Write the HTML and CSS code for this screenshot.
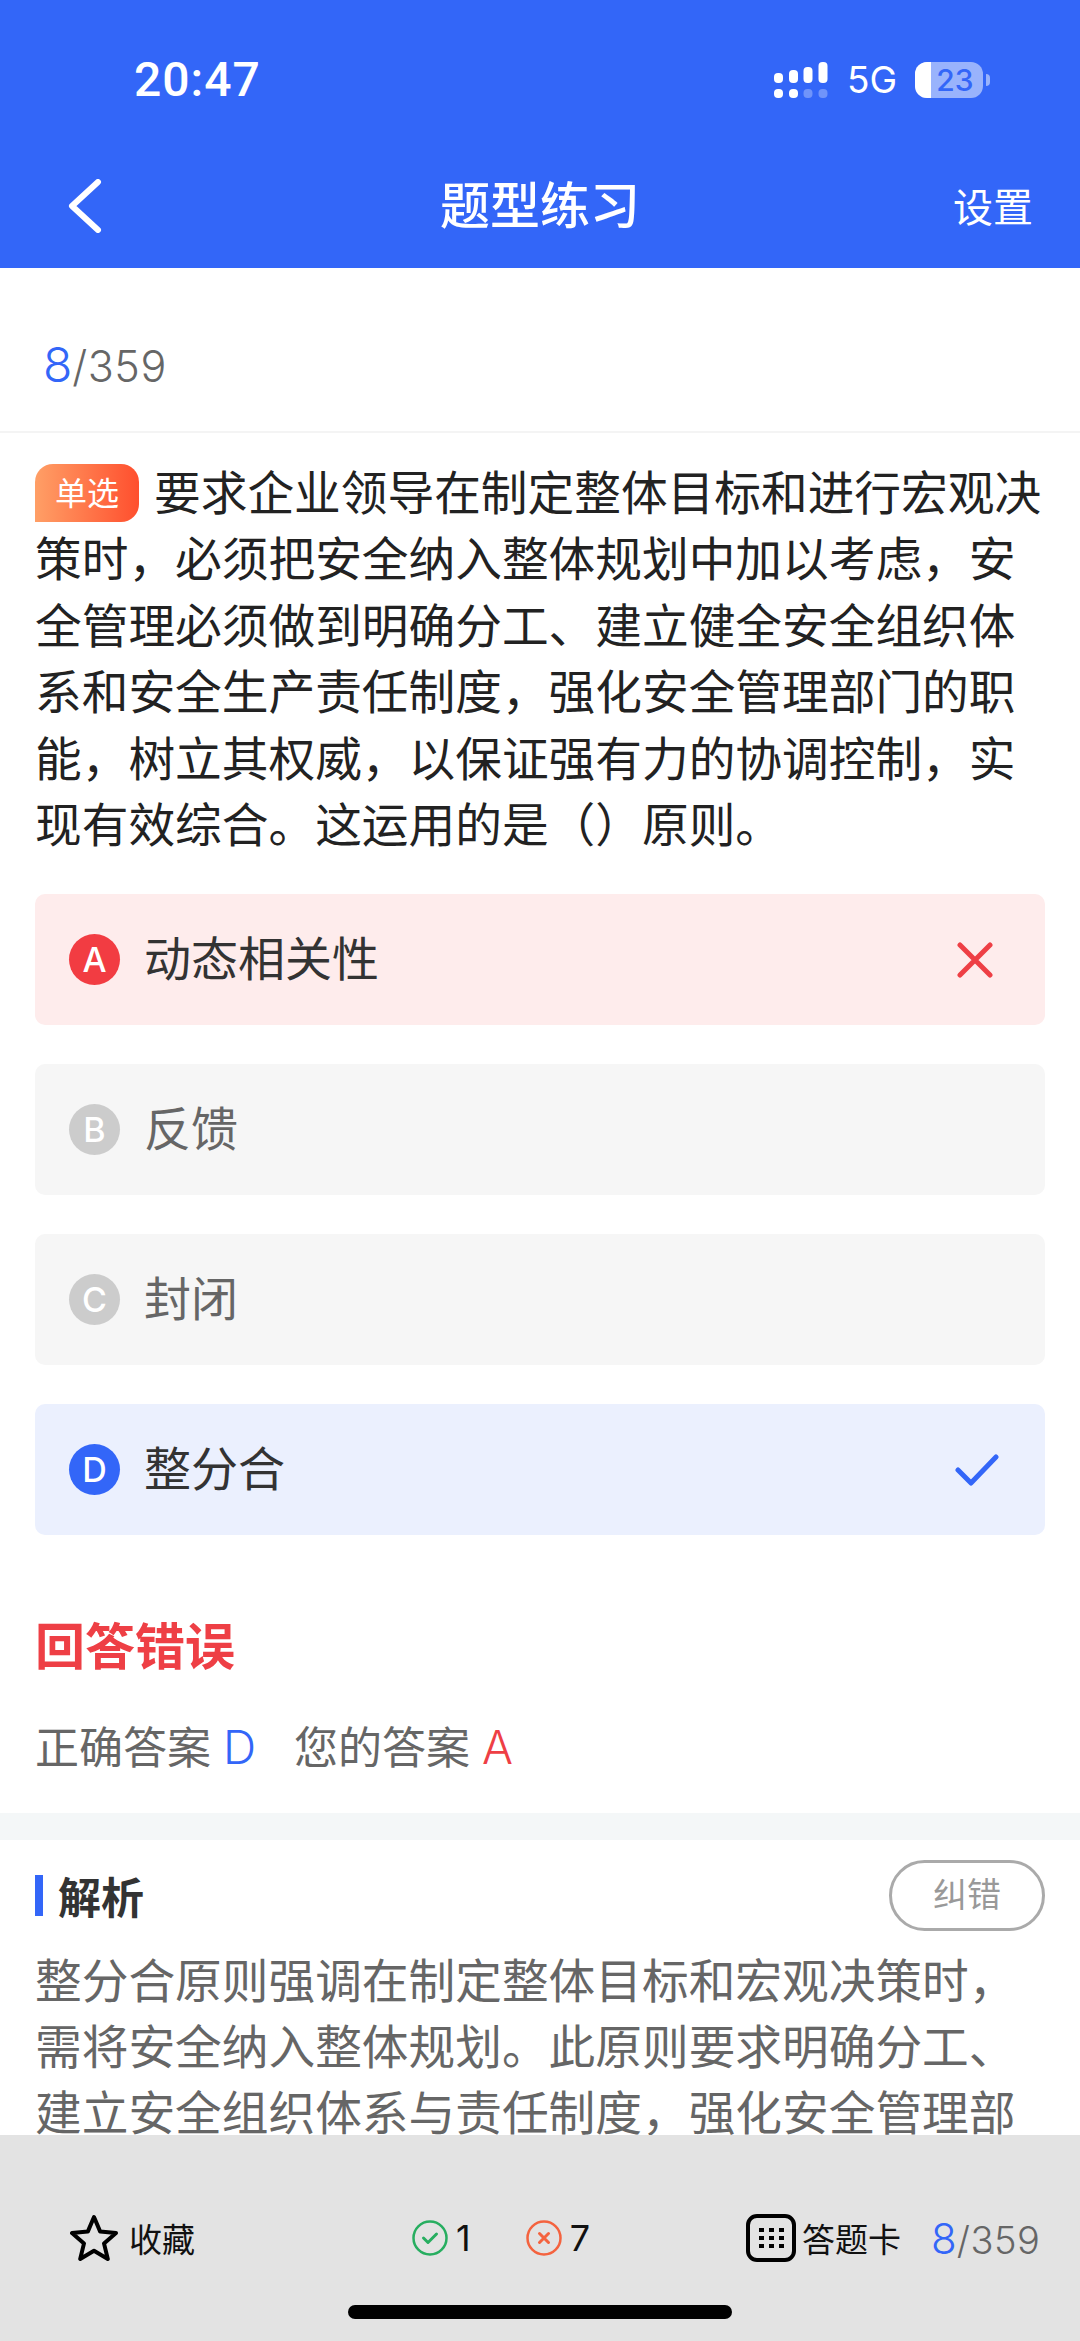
FILE: index.html
```html
<!DOCTYPE html>
<html lang="zh-CN">

<head>
  <meta charset="UTF-8">
  <title>题型练习</title>
  <link rel="stylesheet" href="styles.css">
</head>

<body>
  <div class="page">
    <!-- 顶部蓝色区域 -->
    <header class="top">
      <div class="status">
        <span class="clock">20:47</span>
        <div class="status-right">
          <svg class="signal" width="54" height="36" viewBox="0 0 54 36" fill="#fff">
            <rect x="0" y="11" width="9" height="10" rx="4" />
            <rect x="15" y="8" width="9" height="13" rx="4" />
            <rect x="29.5" y="5" width="9" height="16" rx="4" />
            <rect x="44.5" y="0" width="9" height="21" rx="4" />
            <rect x="0" y="27" width="9" height="9" rx="4" />
            <rect x="15" y="27" width="9" height="9" rx="4" />
            <rect x="29.5" y="27" width="9" height="9" rx="4" opacity=".3" />
            <rect x="44.5" y="27" width="9" height="9" rx="4" opacity=".3" />
          </svg>
          <span class="net">5G</span>
          <div class="battery">
            <span class="battery-fill"></span>
            <span class="battery-num">23</span>
          </div>
          <span class="battery-tip"></span>
        </div>
      </div>
      <nav class="navbar">
        <svg class="back" width="34" height="54" viewBox="0 0 34 54" fill="none" stroke="#fff" stroke-width="6" stroke-linecap="round" stroke-linejoin="round">
          <path d="M30 3 L4 27 L30 51" />
        </svg>
        <h1 class="nav-title">题型练习</h1>
        <span class="nav-link">设置</span>
      </nav>
    </header>

    <div class="counter">
      <span class="count-now">8</span><span class="count-all">/359</span>
    </div>

    <!-- 题目 -->
    <section class="question">
      <p class="stem"><span class="tag">单选</span>要求企业领导在制定整体目标和进行宏观决策时，必须把安全纳入整体规划中加以考虑，安全管理必须做到明确分工、建立健全安全组织体系和安全生产责任制度，强化安全管理部门的职能，树立其权威，以保证强有力的协调控制，实现有效综合。这运用的是（）原则。</p>

      <div class="options">
        <div class="option option-wrong">
          <span class="letter">A</span>
          <span class="option-text">动态相关性</span>
          <svg class="mark" width="36" height="36" viewBox="0 0 36 36" fill="none" stroke="#ee3f45" stroke-width="5" stroke-linecap="round">
            <path d="M3 3 L33 33 M33 3 L3 33" />
          </svg>
        </div>
        <div class="option">
          <span class="letter">B</span>
          <span class="option-text">反馈</span>
        </div>
        <div class="option">
          <span class="letter">C</span>
          <span class="option-text">封闭</span>
        </div>
        <div class="option option-right">
          <span class="letter">D</span>
          <span class="option-text">整分合</span>
          <svg class="mark" width="44" height="32" viewBox="0 0 44 32" fill="none" stroke="#3366f8" stroke-width="5" stroke-linecap="round" stroke-linejoin="round">
            <path d="M3 16 L16 29 L41 3" />
          </svg>
        </div>
      </div>
    </section>

    <!-- 作答结果 -->
    <section class="result">
      <h2 class="result-title">回答错误</h2>
      <p class="result-line">正确答案<span class="answer blue">D</span><span class="yours">您的答案<span class="answer red">A</span></span></p>
    </section>

    <div class="strip"></div>

    <!-- 解析 -->
    <section class="analysis">
      <div class="analysis-head">
        <h3 class="analysis-title">解析</h3>
        <span class="report">纠错</span>
      </div>
      <p class="analysis-text">整分合原则强调在制定整体目标和宏观决策时，需将安全纳入整体规划。此原则要求明确分工、建立安全组织体系与责任制度，强化安全管理部</p>
    </section>

    <!-- 底部工具栏 -->
    <footer class="bottom">
      <div class="toolbar">
        <div class="tool">
          <svg width="48" height="48" viewBox="0 0 48 48" fill="none" stroke="#000" stroke-width="4" stroke-linejoin="round">
            <path d="M24 3 L30.2 17.6 L46 19 L34 29.4 L37.8 45 L24 36.8 L10.2 45 L14 29.4 L2 19 L17.8 17.6 Z" />
          </svg>
          <span>收藏</span>
        </div>
        <div class="stats">
          <svg width="36" height="36" viewBox="0 0 36 36" fill="none" stroke="#27ae60" stroke-width="2.5" stroke-linecap="round" stroke-linejoin="round">
            <circle cx="18" cy="18" r="16.5" />
            <path d="M11.5 18 L16 22.5 L24.5 14" stroke-width="3" />
          </svg>
          <span class="stat-num">1</span>
          <svg class="stat-bad" width="36" height="36" viewBox="0 0 36 36" fill="none" stroke="#f4633f" stroke-width="2.5" stroke-linecap="round">
            <circle cx="18" cy="18" r="16.5" />
            <path d="M13.5 13.5 L22.5 22.5 M22.5 13.5 L13.5 22.5" stroke-width="3" />
          </svg>
          <span class="stat-num">7</span>
        </div>
        <div class="tool tool-card">
          <svg width="50" height="48" viewBox="0 0 50 48" fill="none" stroke="#000" stroke-width="4">
            <rect x="2" y="2" width="46" height="44" rx="9" />
            <g fill="#000" stroke="none">
              <rect x="13" y="14" width="5" height="4" />
              <rect x="23" y="14" width="5" height="4" />
              <rect x="33" y="14" width="5" height="4" />
              <rect x="13" y="22" width="5" height="4" />
              <rect x="23" y="22" width="5" height="4" />
              <rect x="33" y="22" width="5" height="4" />
              <rect x="13" y="30" width="5" height="4" />
              <rect x="23" y="30" width="5" height="4" />
              <rect x="33" y="30" width="5" height="4" />
            </g>
          </svg>
          <span>答题卡</span>
          <div class="bottom-count">
            <span class="bottom-now">8</span><span class="bottom-all">/359</span>
          </div>
        </div>
      </div>
      <div class="home-bar"></div>
    </footer>
  </div>
</body>

</html>
```

FILE: styles.css
```css
/* 页面 */
* {
  box-sizing: border-box;
}

body {
  margin: 0;
  background: #fff;
  font-family: "Noto Sans CJK SC", "Noto Sans", sans-serif;
}

h1, h2, h3, p {
  margin: 0;
}

.page {
  position: relative;
  width: 1080px;
  height: 2341px;
  overflow: hidden;
  background: #fff;
}

/* 顶部 */
.top {
  height: 268px;
  background: #3366f8;
  color: #fff;
}

.status {
  display: flex;
  justify-content: space-between;
  align-items: center;
  height: 160px;
  padding: 0 90px 0 134px;
}

.clock {
  font-family: Roboto, sans-serif;
  font-size: 48px;
  font-weight: 500;
  letter-spacing: 1px;
  line-height: 56px;
}

.status-right {
  display: flex;
  align-items: center;
}

.signal {
  margin-right: 19px;
}

.net {
  width: 68px;
  font-family: Inter, sans-serif;
  font-size: 37px;
  line-height: 40px;
}

.battery {
  position: relative;
  width: 68px;
  height: 36px;
  border-radius: 12px;
  background: rgba(255, 255, 255, 0.5);
  overflow: hidden;
  text-align: center;
}

.battery-fill {
  position: absolute;
  left: 0;
  top: 0;
  width: 16px;
  height: 36px;
  background: #fff;
}

.battery-num {
  position: relative;
  margin-left: 12px;
  font-family: Inter, sans-serif;
  font-size: 30px;
  font-weight: 500;
  line-height: 36px;
  color: #3366f8;
}

.battery-tip {
  width: 4px;
  height: 12px;
  margin-left: 3px;
  border-radius: 0 6px 6px 0;
  background: rgba(255, 255, 255, 0.5);
}

.navbar {
  position: relative;
  display: flex;
  justify-content: space-between;
  align-items: center;
  height: 108px;
  margin-top: -12px;
  padding: 0 47px 0 68px;
}

.back {
  margin-top: 8px;
}

.nav-title {
  position: absolute;
  left: 0;
  right: 0;
  text-align: center;
  font-size: 50px;
  font-weight: 500;
  line-height: 60px;
}

.nav-link {
  margin-top: 6px;
  font-size: 40px;
  line-height: 50px;
}

/* 进度 */
.counter {
  height: 165px;
  padding: 65px 0 0 43px;
  border-bottom: 2px solid #f4f4f4;
  line-height: 64px;
}

.count-now {
  font-family: Inter, sans-serif;
  font-size: 48px;
  font-weight: 300;
  color: #3366f8;
}

.count-all {
  font-family: Inter, sans-serif;
  font-size: 43px;
  font-weight: 300;
  letter-spacing: 0.5px;
  color: #666;
}

/* 题目 */
.question {
  padding: 24px 35px 0;
}

.stem {
  font-size: 46.7px;
  line-height: 66.4px;
  color: #222;
}

.tag {
  display: inline-block;
  width: 104px;
  height: 58px;
  margin-right: 15px;
  border-radius: 18px 18px 18px 0;
  background: linear-gradient(to right, #ff9f66, #ff4f2e);
  color: #fff;
  font-size: 32px;
  line-height: 54px;
  text-align: center;
  vertical-align: 5px;
}

.options {
  display: flex;
  flex-direction: column;
  gap: 39px;
  margin-top: 39px;
}

.option {
  display: flex;
  align-items: center;
  height: 131px;
  padding: 0 34px;
  border-radius: 10px;
  background: #f6f6f6;
  color: #666;
}

.option-wrong {
  background: #feecec;
  color: #333;
}

.option-right {
  background: #ebf0fe;
  color: #333;
}

.letter {
  width: 51px;
  height: 51px;
  border-radius: 50%;
  background: #ccc;
  color: #fff;
  font-family: Inter, sans-serif;
  font-size: 34px;
  font-weight: 500;
  line-height: 51px;
  text-align: center;
}

.option-wrong .letter {
  background: #f23c42;
}

.option-right .letter {
  background: #3366f8;
}

.option-text {
  flex: 1;
  margin-left: 24px;
  padding-bottom: 8px;
  font-size: 47px;
  line-height: 60px;
}

.mark {
  margin-right: 18px;
}

.option-right .mark {
  margin-right: 12px;
}

/* 结果 */
.result {
  height: 278px;
  padding: 68px 35px 0;
}

.result-title {
  font-size: 50px;
  font-weight: 700;
  line-height: 80px;
  color: #ee3f45;
}

.result-line {
  margin-top: 32px;
  font-size: 44px;
  line-height: 60px;
  color: #666;
}

.answer {
  margin-left: 12px;
  font-family: Inter, sans-serif;
  font-size: 46px;
  font-weight: 300;
}

.blue {
  color: #3366f8;
}

.red {
  color: #ee3f45;
}

.yours {
  margin-left: 38px;
}

.strip {
  height: 27px;
  background: #f4f7f8;
}

/* 解析 */
.analysis {
  padding: 20px 35px 0;
}

.analysis-head {
  display: flex;
  justify-content: space-between;
  align-items: center;
  height: 71px;
}

.analysis-title {
  padding-left: 15px;
  border-left: 8px solid #3366f8;
  font-size: 43px;
  font-weight: 700;
  line-height: 41px;
  color: #333;
}

.report {
  width: 156px;
  height: 71px;
  border: 3px solid #aaa;
  border-radius: 36px;
  color: #999;
  font-size: 34px;
  line-height: 60px;
  text-align: center;
}

.analysis-text {
  margin-top: 14px;
  font-size: 46.7px;
  line-height: 66px;
  color: #666;
}

/* 底部 */
.bottom {
  position: absolute;
  left: 0;
  right: 0;
  bottom: 0;
  height: 206px;
  padding-top: 79px;
  background: #e3e3e3;
}

.toolbar {
  display: flex;
  align-items: center;
  height: 48px;
  padding-left: 70px;
}

.tool {
  display: flex;
  align-items: center;
  gap: 11px;
  font-size: 33px;
  color: #111;
}

.stats {
  display: flex;
  align-items: center;
  margin-left: 217px;
  font-family: Inter, sans-serif;
  font-size: 36px;
  color: #111;
}

.stat-num {
  margin-left: 8px;
}

.stat-bad {
  margin-left: 55px;
}

.tool-card {
  margin-left: 156px;
  gap: 6px;
}

.bottom-count {
  margin-left: 24px;
  font-family: Inter, sans-serif;
  font-weight: 300;
}

.bottom-now {
  font-size: 42px;
  color: #3366f8;
}

.bottom-all {
  font-size: 38px;
  letter-spacing: 0.5px;
  color: #666;
}

.home-bar {
  width: 384px;
  height: 14px;
  margin: 43px auto 0;
  border-radius: 7px;
  background: #000;
}
```
